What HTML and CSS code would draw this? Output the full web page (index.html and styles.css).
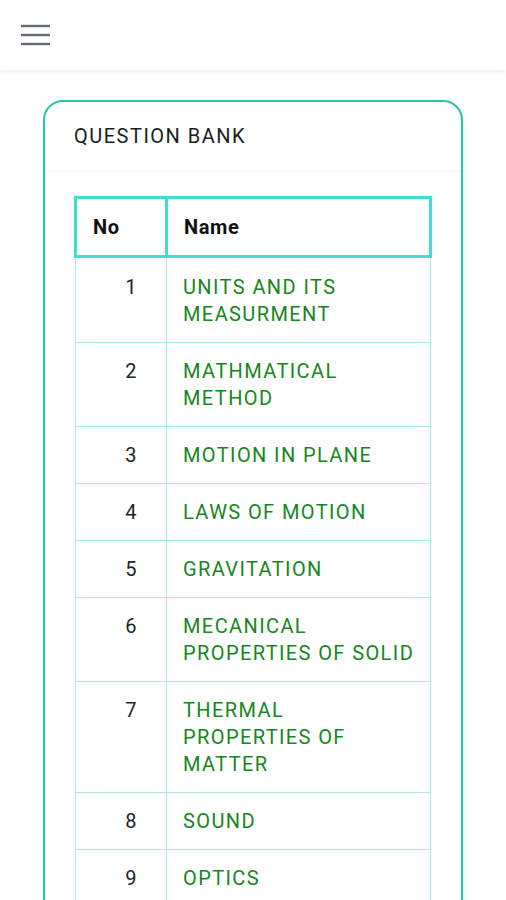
FILE: index.html
```html
<!DOCTYPE html>
<html>
<head>
<meta charset="utf-8">
<link rel="stylesheet" href="styles.css">
</head>
<body>
<header class="topbar">
  <button class="menu-btn" aria-label="menu">
    <svg width="30" height="22" viewBox="0 0 30 22"><g stroke="#636a73" stroke-width="2.4"><line x1="0" y1="2" x2="29" y2="2"/><line x1="0" y1="11" x2="29" y2="11"/><line x1="0" y1="20" x2="29" y2="20"/></g></svg>
  </button>
</header>
<main class="content">
  <section class="card">
    <div class="card-header">QUESTION BANK</div>
    <div class="card-body">
      <table class="qtable">
        <thead>
          <tr><th class="col-no">No</th><th>Name</th></tr>
        </thead>
        <tbody>
          <tr><td class="num">1</td><td class="name">UNITS AND ITS MEASURMENT</td></tr>
          <tr><td class="num">2</td><td class="name">MATHMATICAL METHOD</td></tr>
          <tr><td class="num">3</td><td class="name">MOTION IN PLANE</td></tr>
          <tr><td class="num">4</td><td class="name">LAWS OF MOTION</td></tr>
          <tr><td class="num">5</td><td class="name">GRAVITATION</td></tr>
          <tr><td class="num">6</td><td class="name">MECANICAL PROPERTIES OF SOLID</td></tr>
          <tr><td class="num">7</td><td class="name">THERMAL PROPERTIES OF MATTER</td></tr>
          <tr><td class="num">8</td><td class="name">SOUND</td></tr>
          <tr><td class="num">9</td><td class="name">OPTICS</td></tr>
        </tbody>
      </table>
    </div>
  </section>
</main>
</body>
</html>
```
FILE: styles.css
```css
html, body {
  margin: 0;
  padding: 0;
  background: #ffffff;
  font-family: Roboto, "Noto Sans", "Liberation Sans", sans-serif;
  color: #212529;
}
.topbar {
  height: 70px;
  background: #fff;
  box-shadow: 0 2px 6px rgba(0,0,0,0.07);
  display: flex;
  align-items: center;
  padding-left: 21px;
  position: relative;
  z-index: 1;
}
.menu-btn {
  border: 0;
  background: none;
  padding: 0;
  display: flex;
}
.content {
  padding: 30px 0 0 43px;
}
.card {
  box-sizing: border-box;
  width: 420px;
  border: 2px solid #22c8a4;
  border-radius: 20px;
  background: #fff;
}
.card-header {
  padding: 20px 29px;
  line-height: 29px;
  font-size: 20px;
  letter-spacing: 1.5px;
  color: #1b1e21;
  border-bottom: 1px solid #f1f1f1;
}
.card-body {
  padding: 24px 29px 30px 29px;
}
.qtable {
  width: 100%;
  border-collapse: collapse;
  font-size: 20px;
  line-height: 27px;
  letter-spacing: 1.4px;
}
.qtable th {
  text-align: left;
  font-weight: 700;
  padding: 15px 16px 14px 16px;
  border: 3px solid #40dfd2;
  color: #111;
  letter-spacing: 0.6px;
}
.qtable .col-no {
  width: 56px;
}
.qtable td {
  border: 1px solid #a8e8e8;
  padding: 16px 16px 14px 16px;
  vertical-align: top;
}
.qtable tbody tr:not(:first-child) td {
  padding-top: 15px;
}
.qtable td.num {
  text-align: right;
  padding-right: 28px;
  color: #212529;
}
.qtable td.name {
  color: #15871d;
  padding-right: 14px;
}
```
